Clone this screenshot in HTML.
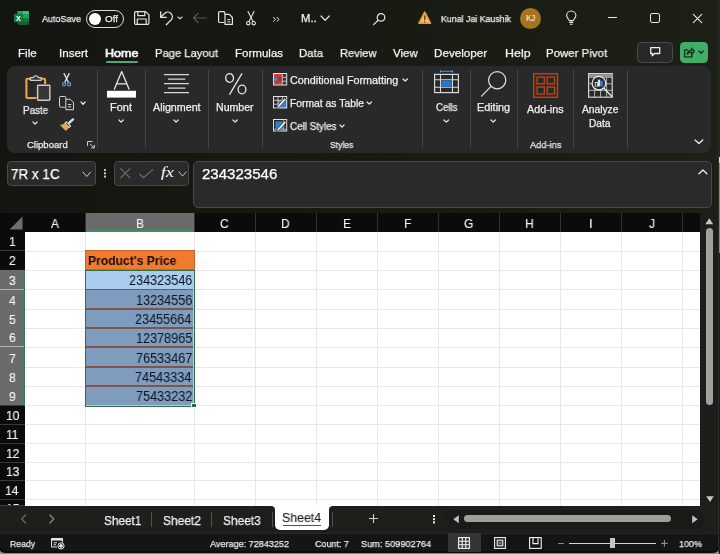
<!DOCTYPE html>
<html><head><meta charset="utf-8"><title>Excel</title>
<style>
*{box-sizing:border-box;margin:0;padding:0}
html,body{width:720px;height:554px;overflow:hidden;background:linear-gradient(90deg,#131510 0%,#171a12 45%,#1c2016 100%) #15180f;font-family:"Liberation Sans",sans-serif;color:#fff}
.a{position:absolute}
.t{position:absolute;white-space:nowrap;line-height:1;transform-origin:0 0;will-change:transform}
svg{position:absolute;overflow:visible}
</style></head><body>


<!-- title bar -->
<svg style="left:13.5px;top:11px" width="15" height="14" viewBox="0 0 15 14">
 <rect x="3.5" y="0" width="11.5" height="14" rx="1.2" fill="#185c37"/>
 <path d="M9 0h4.8a1.2 1.2 0 0 1 1.2 1.2v2.3h-6z" fill="#33c481"/>
 <rect x="9" y="3.5" width="6" height="3.5" fill="#21a366"/>
 <rect x="9" y="7" width="6" height="3.5" fill="#107c41"/>
 <rect x="3.5" y="0" width="5.5" height="3.5" fill="#21a366"/>
 <rect x="3.5" y="3.5" width="5.5" height="3.5" fill="#107c41"/>
 <rect x="0" y="2.8" width="8.5" height="8.5" rx="1" fill="#107c41"/>
 <text x="4.25" y="9.6" font-size="7" font-weight="bold" fill="#fff" text-anchor="middle" font-family="Liberation Sans, sans-serif">X</text>
</svg>
<div class="a" style="left:85.5px;top:9.5px;width:38.5px;height:18px;border:1.2px solid #d8d8d8;border-radius:9px"></div>
<div class="a" style="left:88.75px;top:12.5px;width:12px;height:12px;border-radius:6px;background:#fff"></div>

<div class="t" style="left:42px;top:13.96px;font-size:9.5px;color:#f0f0f0;transform:scaleX(0.944);-webkit-text-stroke:0.25px #f0f0f0;">AutoSave</div>
<div class="t" style="left:104.56px;top:13.96px;font-size:9.5px;color:#f0f0f0;transform:scaleX(1.032);-webkit-text-stroke:0.25px #f0f0f0;">Off</div>

<svg style="left:133.75px;top:11px" width="15.5" height="14" viewBox="0 0 15.5 14" fill="none" stroke="#e6e6e6" stroke-width="1.2" stroke-linejoin="round">
 <path d="M0.6 1.8a1.2 1.2 0 0 1 1.2-1.2h9.7l3.4 3v8.6a1.2 1.2 0 0 1-1.2 1.2h-11.9a1.2 1.2 0 0 1-1.2-1.2z"/>
 <path d="M3.8 0.6v4h7v-4M3.3 13.4v-5.4h8.9v5.4"/>
</svg>
<svg style="left:160px;top:10.5px" width="14" height="14" viewBox="0 0 14 14" fill="none" stroke="#e6e6e6" stroke-width="1.3" stroke-linecap="round" stroke-linejoin="round">
 <path d="M0.7 0.8v5.5h5.5"/><path d="M1 6l3.6-3.6a4.6 4.6 0 0 1 6.5 6.5l-4.8 4.8"/>
</svg>

<svg style="left:178.45px;top:17.27px" width="4.1" height="1.96" fill="none" stroke="#d8d8d8" stroke-width="1.1" stroke-linecap="round" stroke-linejoin="round"><path d="M0 0 L2.05 1.96 L4.1 0"/></svg>

<svg style="left:193.25px;top:13px" width="13" height="10" viewBox="0 0 13 10" fill="none" stroke="#555a50" stroke-width="1.1" stroke-linecap="round" stroke-linejoin="round"><path d="M5 0.5l-4.5 4.5l4.5 4.5M0.5 5h12.5"/></svg>
<svg style="left:217.5px;top:11px" width="15" height="14" viewBox="0 0 15 14" fill="none" stroke="#e6e6e6" stroke-width="1.2" stroke-linejoin="round">
 <path d="M6.3 11.5h-4.6a1.1 1.1 0 0 1-1.1-1.1v-8.7a1.1 1.1 0 0 1 1.1-1.1h4a1.1 1.1 0 0 1 1.1 1.1v1.5"/>
 <path d="M7 3.4h4.3l3.1 3.1v6.9h-7.4z"/><path d="M9.3 8.6h3M9.3 10.8h3" stroke-width="1"/>
</svg>
<svg style="left:245.5px;top:10.5px" width="10" height="14.5" viewBox="0 0 10 14.5" fill="none" stroke="#e6e6e6" stroke-width="1.1" stroke-linecap="round">
 <path d="M2 0.5l5 10M8 0.5l-5 10"/><circle cx="2.3" cy="12.2" r="1.7"/><circle cx="7.7" cy="12.2" r="1.7"/>
</svg>
<svg style="left:272.5px;top:16.5px" width="7" height="4.5" viewBox="0 0 7 4.5" fill="none" stroke="#e6e6e6" stroke-width="1" stroke-linecap="round" stroke-linejoin="round"><path d="M0.5 0.3l2 2l-2 2M4 0.3l2 2l-2 2"/></svg>

<div class="t" style="left:301.1px;top:13.54px;font-size:10px;color:#f0f0f0;transform:scaleX(1.127);-webkit-text-stroke:0.25px #f0f0f0;">M..</div>
<svg style="left:321.25px;top:16.3px" width="8.25" height="4.4" fill="none" stroke="#e6e6e6" stroke-width="1.2" stroke-linecap="round" stroke-linejoin="round"><path d="M0 0 L4.125 4.4 L8.25 0"/></svg>

<svg style="left:373.25px;top:12.5px" width="12.5" height="12" viewBox="0 0 12.5 12" fill="none" stroke="#e6e6e6" stroke-width="1.2" stroke-linecap="round">
 <circle cx="8" cy="4.4" r="3.8"/><path d="M5.2 7.2l-4.6 4.4"/>
</svg>
<svg style="left:418.25px;top:11.25px" width="13.5" height="13.25" viewBox="0 0 13.5 13.25">
 <path d="M6.75 1.2l5.7 11h-11.4z" fill="#f4bd78" stroke="#e8993c" stroke-width="1.7" stroke-linejoin="round"/>
 <path d="M6.75 4.5v4.8" stroke="#6a3c0c" stroke-width="1.4"/><circle cx="6.75" cy="11" r="0.8" fill="#6a3c0c"/>
</svg>

<div class="t" style="left:441.3px;top:13.96px;font-size:9.5px;color:#f0f0f0;transform:scaleX(0.926);-webkit-text-stroke:0.25px #f0f0f0;">Kunal Jai Kaushik</div>
<div class="a" style="left:520px;top:7.5px;width:21.25px;height:21.25px;border-radius:11px;background:#a67420"></div>
<div class="t" style="left:525.96px;top:14.15px;font-size:8.8px;color:#fff;transform:scaleX(0.911);">KJ</div>

<svg style="left:565.75px;top:11.25px" width="10.5" height="13.75" viewBox="0 0 10.5 13.75" fill="none" stroke="#e6e6e6" stroke-width="1.1" stroke-linejoin="round">
 <path d="M3.2 9.6c0-1.5-2.6-2.4-2.6-5a4.65 4.65 0 0 1 9.3 0c0 2.6-2.6 3.5-2.6 5z"/><path d="M3.3 11.4h3.9M3.9 13.2h2.7"/>
</svg>
<div class="a" style="left:608px;top:17px;width:9px;height:1.1px;background:#e6e6e6"></div>
<div class="a" style="left:650px;top:13px;width:10px;height:10px;border:1.2px solid #e6e6e6;border-radius:2px"></div>
<svg style="left:693px;top:13.5px" width="9" height="9" viewBox="0 0 9 9" stroke="#e6e6e6" stroke-width="1.1" stroke-linecap="round"><path d="M0.3 0.3l8.4 8.4M8.7 0.3l-8.4 8.4"/></svg>

<div class="t" style="left:18.32px;top:47.97px;font-size:11.5px;color:#f4f4f4;transform:scaleX(1.007);-webkit-text-stroke:0.25px #f4f4f4;">File</div>
<div class="t" style="left:58.95px;top:47.97px;font-size:11.5px;color:#f4f4f4;transform:scaleX(1.012);-webkit-text-stroke:0.25px #f4f4f4;">Insert</div>
<div class="t" style="left:104.99px;top:47.97px;font-size:11.5px;color:#f4f4f4;transform:scaleX(1.093);-webkit-text-stroke:0.7px #f4f4f4;">Home</div>
<div class="t" style="left:154.6px;top:47.97px;font-size:11.5px;color:#f4f4f4;transform:scaleX(0.975);-webkit-text-stroke:0.25px #f4f4f4;">Page Layout</div>
<div class="t" style="left:235.33px;top:47.97px;font-size:11.5px;color:#f4f4f4;transform:scaleX(1.003);-webkit-text-stroke:0.25px #f4f4f4;">Formulas</div>
<div class="t" style="left:299.09px;top:47.97px;font-size:11.5px;color:#f4f4f4;transform:scaleX(0.985);-webkit-text-stroke:0.25px #f4f4f4;">Data</div>
<div class="t" style="left:339.61px;top:47.97px;font-size:11.5px;color:#f4f4f4;transform:scaleX(0.965);-webkit-text-stroke:0.25px #f4f4f4;">Review</div>
<div class="t" style="left:392.94px;top:47.97px;font-size:11.5px;color:#f4f4f4;transform:scaleX(0.993);-webkit-text-stroke:0.25px #f4f4f4;">View</div>
<div class="t" style="left:434.07px;top:47.97px;font-size:11.5px;color:#f4f4f4;transform:scaleX(1.013);-webkit-text-stroke:0.25px #f4f4f4;">Developer</div>
<div class="t" style="left:504.5px;top:47.97px;font-size:11.5px;color:#f4f4f4;transform:scaleX(1.083);-webkit-text-stroke:0.25px #f4f4f4;">Help</div>
<div class="t" style="left:546.48px;top:47.97px;font-size:11.5px;color:#f4f4f4;transform:scaleX(0.995);-webkit-text-stroke:0.25px #f4f4f4;">Power Pivot</div>
<div class="a" style="left:106px;top:60.5px;width:32px;height:2px;background:#4fa873;border-radius:1px"></div>

<div class="a" style="left:636.9px;top:41.5px;width:35.9px;height:21.4px;background:#282828;border:1px solid #4b4b47;border-radius:4.5px"></div>
<svg style="left:649.7px;top:47px" width="10.4" height="9.8" viewBox="0 0 10.4 9.8" fill="none" stroke="#eeeeee" stroke-width="1.3" stroke-linejoin="round"><path d="M0.7 0.7h9v5.8h-5.2l-2.2 2.4v-2.4h-1.6z"/></svg>
<div class="a" style="left:680px;top:41.5px;width:28.1px;height:21.4px;background:#40ad68;border-radius:4.5px"></div>
<svg style="left:684px;top:46.8px" width="10.8" height="10.6" viewBox="0 0 11.5 11" fill="none" stroke="#12321d" stroke-width="1.35" stroke-linejoin="round" stroke-linecap="round"><path d="M4 2.8h-3.4v7.6h8v-2.6"/><path d="M3.3 7.6c0.3-2.6 2-4 4.7-4.1v-2.5l3 3.4l-3 3.4v-2.4c-2 0-3.5 0.6-4.7 2.2z"/></svg>

<svg style="left:699.4px;top:51.16px" width="4.2" height="2.18" fill="none" stroke="#12321d" stroke-width="1.4" stroke-linecap="round" stroke-linejoin="round"><path d="M0 0 L2.1 2.18 L4.2 0"/></svg>
<div class="a" style="left:7.3px;top:66px;width:704px;height:86.5px;background:#292929;border-radius:8px"></div>
<div class="a" style="left:96.7px;top:70px;width:1px;height:78px;background:#444"></div>
<div class="a" style="left:145.1px;top:70px;width:1px;height:78px;background:#444"></div>
<div class="a" style="left:207.9px;top:70px;width:1px;height:78px;background:#444"></div>
<div class="a" style="left:261.7px;top:70px;width:1px;height:78px;background:#444"></div>
<div class="a" style="left:421.6px;top:70px;width:1px;height:78px;background:#444"></div>
<div class="a" style="left:470.1px;top:70px;width:1px;height:78px;background:#444"></div>
<div class="a" style="left:517.2px;top:70px;width:1px;height:78px;background:#444"></div>
<div class="a" style="left:572.8px;top:70px;width:1px;height:78px;background:#444"></div>
<div class="a" style="left:626.6px;top:70px;width:1px;height:78px;background:#444"></div>

<!-- paste -->
<svg style="left:25px;top:72.5px" width="26" height="28" viewBox="0 0 26 28" fill="none">
 <path d="M6 5.8h-3.6a1 1 0 0 0-1 1v17.2a1 1 0 0 0 1 1h9" stroke="#e8a640" stroke-width="2.1"/>
 <path d="M15.5 5.8h3.6a1 1 0 0 1 1 1v4.2" stroke="#e8a640" stroke-width="2.1"/>
 <path d="M5.5 7.3v-2.6h2.8a2.6 2.6 0 0 1 5 0h2.8v2.6z" fill="#333" stroke="#cfcfcf" stroke-width="1.2" stroke-linejoin="round"/>
 <rect x="12.6" y="12.2" width="12.2" height="15" rx="0.6" fill="#363636" stroke="#c9c9c9" stroke-width="1.5"/>
</svg>
<div class="t" style="left:22.91px;top:105.73px;font-size:10px;color:#f0f0f0;transform:scaleX(0.982);-webkit-text-stroke:0.25px #f0f0f0;">Paste</div>
<svg style="left:33.225px;top:122.315px" width="4.15" height="2.07" fill="none" stroke="#e6e6e6" stroke-width="1.25" stroke-linecap="round" stroke-linejoin="round"><path d="M0 0 L2.075 2.07 L4.15 0"/></svg>

<svg style="left:61.8px;top:73.3px" width="9.2" height="13.7" viewBox="0 0 9.2 13.7" fill="none" stroke-linecap="round">
 <path d="M2.1 0.6l4.3 8.7M7.1 0.6l-4.3 8.7" stroke="#e4e4e4" stroke-width="1.3"/><circle cx="2.1" cy="11.3" r="1.6" stroke="#4f9be0" stroke-width="1.2"/><circle cx="7.1" cy="11.3" r="1.6" stroke="#4f9be0" stroke-width="1.2"/>
</svg>
<svg style="left:58.9px;top:95.5px" width="15" height="14.2" viewBox="0 0 15 14.2" fill="none" stroke="#d8d8d8" stroke-width="1" stroke-linejoin="round">
 <path d="M5.8 11.2h-4.3a1 1 0 0 1-1-1v-8.7a1 1 0 0 1 1-1h4.3a1 1 0 0 1 1 1v1.8"/>
 <path d="M6.8 3.3h4.5l3.2 3.2v7.2h-7.7z" fill="#292929"/><path d="M9 8.5h3.3M9 10.8h3.3"/>
</svg>
<svg style="left:80.525px;top:101.615px" width="4.15" height="2.27" fill="none" stroke="#e6e6e6" stroke-width="1.25" stroke-linecap="round" stroke-linejoin="round"><path d="M0 0 L2.075 2.27 L4.15 0"/></svg>

<svg style="left:59.5px;top:118.4px" width="14.5" height="13" viewBox="0 0 14.5 13" fill="none">
 <path d="M13 1.4l-3.6 3.3" stroke="#e0e0e0" stroke-width="2.4" stroke-linecap="round"/>
 <path d="M6.3 3.8l4.2 4.2l-1.5 1.5l-4.2-4.2z" fill="#292929" stroke="#e0e0e0" stroke-width="1.1" stroke-linejoin="round"/>
 <path d="M4.3 5.8l4.2 4.3l-2.8 2.4l-5.2-5.4c1.6 0.2 2.8-0.3 3.8-1.3z" fill="#e8a640" stroke="#e8c070" stroke-width="0.7" stroke-linejoin="round"/>
</svg>
<div class="t" style="left:26.73px;top:139.96px;font-size:9.5px;color:#ececec;transform:scaleX(0.997);-webkit-text-stroke:0.25px #ececec;">Clipboard</div>

<svg style="left:87.1px;top:141.2px" width="7.8" height="7.4" viewBox="0 0 7.8 7.4" fill="none" stroke="#d0d0d0" stroke-width="1"><path d="M0.5 5v-4.5h5"/><path d="M3 2.8l4 4M7.3 3.8v3.1h-3.1"/></svg>

<!-- font -->
<svg style="left:107px;top:71.4px" width="29" height="26.6" viewBox="0 0 29 26.6" fill="none">
 <path d="M7.2 18.6l7.5-18l7.5 18M9.6 12.8h10.2" stroke="#e6e6e6" stroke-width="1.3" stroke-linejoin="round"/>
 <rect x="0" y="19.8" width="29" height="6.8" fill="#fff"/>
</svg>
<div class="t" style="left:110.32px;top:102.94px;font-size:10px;color:#f0f0f0;transform:scaleX(1.097);-webkit-text-stroke:0.25px #f0f0f0;">Font</div>
<svg style="left:119.125px;top:119.515px" width="4.25" height="2.17" fill="none" stroke="#e6e6e6" stroke-width="1.25" stroke-linecap="round" stroke-linejoin="round"><path d="M0 0 L2.125 2.17 L4.25 0"/></svg>

<!-- alignment -->
<svg style="left:164px;top:73.5px" width="25" height="19.5" viewBox="0 0 25 19.5" stroke="#d8d8d8" stroke-width="1.2">
 <path d="M0 0.6h25M3.9 5.1h17.5M0 9.6h25M3.9 14.1h17.5M0 18.7h25"/>
</svg>
<div class="t" style="left:152.9px;top:102.94px;font-size:10px;color:#f0f0f0;transform:scaleX(1.07);-webkit-text-stroke:0.25px #f0f0f0;">Alignment</div>
<svg style="left:174.275px;top:119.515px" width="4.2" height="2.17" fill="none" stroke="#e6e6e6" stroke-width="1.25" stroke-linecap="round" stroke-linejoin="round"><path d="M0 0 L2.1 2.17 L4.2 0"/></svg>

<!-- number -->
<svg style="left:224.7px;top:72.75px" width="21.6" height="22" viewBox="0 0 21.6 22" fill="none" stroke="#e6e6e6" stroke-width="1.3">
 <ellipse cx="4.6" cy="5" rx="3.9" ry="4.3"/><ellipse cx="17" cy="16.5" rx="3.9" ry="4.3"/><path d="M17 0.3l-12.5 21.4"/>
</svg>
<div class="t" style="left:216.05px;top:102.94px;font-size:10px;color:#f0f0f0;transform:scaleX(1.056);-webkit-text-stroke:0.25px #f0f0f0;">Number</div>
<svg style="left:232.525px;top:119.515px" width="4.25" height="2.17" fill="none" stroke="#e6e6e6" stroke-width="1.25" stroke-linecap="round" stroke-linejoin="round"><path d="M0 0 L2.125 2.17 L4.25 0"/></svg>

<!-- styles -->
<svg style="left:272.7px;top:73.3px" width="14.2" height="12.5" viewBox="0 0 14.2 12.5" fill="none">
 <rect x="0.5" y="0.5" width="13.2" height="11.5" fill="#3a3a3a"/>
 <rect x="1" y="1" width="8" height="3.2" fill="#e23b30"/><rect x="5" y="4.2" width="4.2" height="4" fill="#b03028"/>
 <rect x="1" y="4.2" width="4" height="4" fill="#3f83d8"/><rect x="1" y="8.2" width="8" height="3.3" fill="#e23b30"/>
 <path d="M5 0.5v11.5M9.3 0.5v11.5M0.5 4.3h13.2M0.5 8.2h13.2" stroke="#7a4a48" stroke-width="0.6"/>
 <rect x="0.5" y="0.5" width="13.2" height="11.5" stroke="#e2e2e2" stroke-width="1"/>
 <path d="M9.3 0.5v11.5M9.3 4.3h4.4M9.3 8.2h4.4" stroke="#cfcfcf" stroke-width="0.8"/>
</svg>
<div class="t" style="left:289.86px;top:76.03px;font-size:10px;color:#f0f0f0;transform:scaleX(1.077);-webkit-text-stroke:0.25px #f0f0f0;">Conditional Formatting</div>
<svg style="left:402.525px;top:78.715px" width="4.45" height="2.07" fill="none" stroke="#e6e6e6" stroke-width="1.25" stroke-linecap="round" stroke-linejoin="round"><path d="M0 0 L2.225 2.07 L4.45 0"/></svg>

<svg style="left:272.7px;top:96.2px" width="14.2" height="13.3" viewBox="0 0 14.2 13.3" fill="none">
 <rect x="5" y="4.3" width="8.7" height="7.7" fill="#2f7fd6"/>
 <rect x="0.5" y="0.5" width="13.2" height="11.5" stroke="#e2e2e2" stroke-width="1"/>
 <path d="M5 0.5v11.5M9.3 0.5v4M0.5 4.3h13.2M0.5 8.2h5" stroke="#d6d6d6" stroke-width="0.9"/>
 <path d="M13.3 3.6l-6.2 6.8c-1 1.1-2.2 1.7-3.6 2.4c0.3-1.5 0.8-2.8 1.8-3.9l6.2-6.8z" fill="#f0f0f0" stroke="#2a2a2a" stroke-width="0.7"/>
</svg>
<div class="t" style="left:289.57px;top:99.03px;font-size:10px;color:#f0f0f0;transform:scaleX(1.034);-webkit-text-stroke:0.25px #f0f0f0;">Format as Table</div>
<svg style="left:366.92499999999995px;top:101.715px" width="4.55" height="2.07" fill="none" stroke="#e6e6e6" stroke-width="1.25" stroke-linecap="round" stroke-linejoin="round"><path d="M0 0 L2.275 2.07 L4.55 0"/></svg>

<svg style="left:272.7px;top:119.1px" width="14.2" height="13.3" viewBox="0 0 14.2 13.3" fill="none">
 <rect x="0.5" y="0.5" width="13.2" height="11.5" stroke="#e2e2e2" stroke-width="1"/>
 <rect x="2.4" y="2.4" width="8" height="7.7" fill="#2f7fd6"/>
 <path d="M10.7 0.5v11.5M0.5 10.2h13.2" stroke="#cfcfcf" stroke-width="0.7"/>
 <path d="M13.3 3.6l-6.2 6.8c-1 1.1-2.2 1.7-3.6 2.4c0.3-1.5 0.8-2.8 1.8-3.9l6.2-6.8z" fill="#f0f0f0" stroke="#2a2a2a" stroke-width="0.7"/>
</svg>
<div class="t" style="left:289.91px;top:121.84px;font-size:10px;color:#f0f0f0;transform:scaleX(0.983);-webkit-text-stroke:0.25px #f0f0f0;">Cell Styles</div>
<svg style="left:340.325px;top:124.515px" width="4.05" height="2.07" fill="none" stroke="#e6e6e6" stroke-width="1.25" stroke-linecap="round" stroke-linejoin="round"><path d="M0 0 L2.025 2.07 L4.05 0"/></svg>
<div class="t" style="left:330.01px;top:140.16px;font-size:9.5px;color:#ececec;transform:scaleX(0.903);-webkit-text-stroke:0.25px #ececec;">Styles</div>

<!-- cells -->
<svg style="left:433.9px;top:70.2px" width="25" height="23.2" viewBox="0 0 25 23.2" fill="none">
 <path d="M6.5 1.3h12M6.5 0v2.6M18.5 0v2.6" stroke="#4b97e4" stroke-width="1"/>
 <rect x="0.6" y="4.4" width="23.8" height="18.2" stroke="#d8d8d8" stroke-width="1.2"/>
 <path d="M6.5 4.4v18.2M18.5 4.4v18.2M0.6 9.8h23.8M0.6 17.2h23.8" stroke="#d8d8d8" stroke-width="1.1"/>
 <rect x="7.3" y="10.7" width="10.4" height="5.8" fill="#1f78dc"/>
</svg>
<div class="t" style="left:435.62px;top:102.94px;font-size:10px;color:#f0f0f0;transform:scaleX(0.967);-webkit-text-stroke:0.25px #f0f0f0;">Cells</div>
<svg style="left:443.92499999999995px;top:119.515px" width="4.55" height="2.17" fill="none" stroke="#e6e6e6" stroke-width="1.25" stroke-linecap="round" stroke-linejoin="round"><path d="M0 0 L2.275 2.17 L4.55 0"/></svg>

<!-- editing -->
<svg style="left:481.2px;top:71.1px" width="25.4" height="25.8" viewBox="0 0 25.4 25.8" fill="none" stroke="#e0e0e0" stroke-width="1.2" stroke-linecap="round">
 <circle cx="16.2" cy="9.2" r="8.6"/><path d="M10 15.4l-9.4 9.8"/>
</svg>
<div class="t" style="left:477.04px;top:102.94px;font-size:10px;color:#f0f0f0;transform:scaleX(1.081);-webkit-text-stroke:0.25px #f0f0f0;">Editing</div>
<svg style="left:491.125px;top:119.515px" width="4.35" height="2.17" fill="none" stroke="#e6e6e6" stroke-width="1.25" stroke-linecap="round" stroke-linejoin="round"><path d="M0 0 L2.175 2.17 L4.35 0"/></svg>

<!-- add-ins -->
<svg style="left:532.8px;top:72.9px" width="25.2" height="25" viewBox="0 0 25.2 25" fill="none" stroke="#b44a22" stroke-width="1.3">
 <rect x="0.7" y="0.7" width="23.8" height="23.6" fill="#4b2317"/>
 <rect x="4" y="4.1" width="7.3" height="6.7" fill="#2a2928"/><rect x="14.2" y="4.1" width="7.3" height="6.7" fill="#2a2928"/><rect x="4" y="14.1" width="7.3" height="6.9" fill="#2a2928"/><rect x="14.2" y="14.1" width="7.3" height="6.9" fill="#2a2928"/>
</svg>
<div class="t" style="left:527.2px;top:104.53px;font-size:10px;color:#f0f0f0;transform:scaleX(1.079);-webkit-text-stroke:0.25px #f0f0f0;">Add-ins</div>
<div class="t" style="left:529.9px;top:140.16px;font-size:9.5px;color:#ececec;transform:scaleX(0.976);-webkit-text-stroke:0.25px #ececec;">Add-ins</div>

<!-- analyze -->
<svg style="left:587.8px;top:72.9px" width="25.5" height="25.5" viewBox="0 0 25.5 25.5" fill="none">
 <rect x="0.6" y="0.6" width="23.6" height="23.6" stroke="#d4d4d4" stroke-width="1.2"/>
 <rect x="1.2" y="1.2" width="22.4" height="2.6" fill="#9a9a9a"/>
 <path d="M0.6 4.3h23.6M0.6 10.8h23.6M0.6 17.3h23.6M6.6 4.3v19.9M12.6 17.3v6.9M18.6 4.3v19.9" stroke="#bdbdbd" stroke-width="0.9"/>
 <circle cx="10.9" cy="10.2" r="6.8" fill="#2b2b2b" stroke="#e6e6e6" stroke-width="1.3"/>
 <rect x="7.2" y="9.4" width="2.3" height="3.8" fill="none" stroke="#e6e6e6" stroke-width="0.8"/><rect x="9.9" y="6.6" width="2.3" height="6.8" fill="#d8e6f4"/><rect x="12.4" y="7.8" width="2.4" height="5.6" fill="#2b86e6"/>
 <path d="M15.9 15.3l8.4 8.7" stroke="#e6e6e6" stroke-width="1.5"/>
</svg>
<div class="t" style="left:582.2px;top:104.73px;font-size:10px;color:#f0f0f0;transform:scaleX(1.024);-webkit-text-stroke:0.25px #f0f0f0;">Analyze</div>
<div class="t" style="left:589.18px;top:118.73px;font-size:10px;color:#f0f0f0;transform:scaleX(1.02);-webkit-text-stroke:0.25px #f0f0f0;">Data</div>
<svg style="left:694.55px;top:140.13000000000002px" width="7.8" height="3.54" fill="none" stroke="#ececec" stroke-width="1.3" stroke-linecap="round" stroke-linejoin="round"><path d="M0 0 L3.9 3.54 L7.8 0"/></svg>

<div class="a" style="left:6.9px;top:160.5px;width:89px;height:25px;background:#2a2a2a;border:1px solid #484a44;border-radius:4px"></div>
<div class="t" style="left:11.03px;top:166.73px;font-size:14.5px;color:#fff;transform:scaleX(0.929);-webkit-text-stroke:0.25px #fff;">7R x 1C</div>
<svg style="left:82.7px;top:171.54000000000002px" width="7.6" height="4.52" fill="none" stroke="#d0d0d0" stroke-width="1" stroke-linecap="round" stroke-linejoin="round"><path d="M0 0 L3.8 4.52 L7.6 0"/></svg>

<div class="a" style="left:104px;top:169.3px;width:1.6px;height:1.6px;background:#c8c8c8;box-shadow:0 3.3px 0 #c8c8c8,0 6.6px 0 #c8c8c8"></div>
<div class="a" style="left:113.9px;top:160.5px;width:75px;height:25px;background:#2a2a2a;border:1px solid #484a44;border-radius:4px"></div>
<svg style="left:120px;top:168.4px" width="10.6" height="10.6" viewBox="0 0 10.6 10.6" stroke="#707070" stroke-width="1.1"><path d="M0.4 0.4l9.8 9.8M10.2 0.4l-9.8 9.8"/></svg>
<svg style="left:138.9px;top:169.3px" width="14.4" height="9.1" viewBox="0 0 14.4 9.1" fill="none" stroke="#707070" stroke-width="1.1"><path d="M0.4 5l4 3.7l9.6-8.3"/></svg>
<div class="t" style="left:160.6px;top:165.3px;font-size:14.5px;color:#ececec;font-family:'Liberation Serif',serif;font-style:italic;-webkit-text-stroke:0.15px #ececec;transform:scaleX(1.22)">fx</div>

<svg style="left:179.20000000000002px;top:171.54000000000002px" width="7.1" height="4.12" fill="none" stroke="#c4c4c4" stroke-width="1" stroke-linecap="round" stroke-linejoin="round"><path d="M0 0 L3.55 4.12 L7.1 0"/></svg>

<div class="a" style="left:192.5px;top:160.5px;width:519.5px;height:47px;background:#2a2a2a;border:1px solid #484a44;border-radius:5px"></div>
<div class="t" style="left:201.75px;top:166.73px;font-size:14.5px;color:#fff;transform:scaleX(1.038);-webkit-text-stroke:0.25px #fff;">234323546</div>
<svg style="left:698.55px;top:170.33px" width="7.9" height="3.84" fill="none" stroke="#ececec" stroke-width="1.3" stroke-linecap="round" stroke-linejoin="round"><path d="M0 3.84 L3.95 0 L7.9 3.84"/></svg>
<div class="a" style="left:0;top:213px;width:700px;height:292.5px;background:#0b0b0b"></div>
<div class="a" style="left:25px;top:231.5px;width:675px;height:274px;background:#fff"></div>
<svg style="left:0;top:213px" width="25" height="19" viewBox="0 0 25 19"><path d="M22.5 3.5v13h-13z" fill="#6e6e6e"/></svg>
<div class="t" style="left:51.27px;top:216.8px;font-size:13px;color:#f2f2f2;transform:scaleX(0.92);-webkit-text-stroke:0.15px #f2f2f2;">A</div>
<div class="a" style="left:85.5px;top:213px;width:108.75px;height:18px;background:#6b6b6b"></div>
<div class="a" style="left:85.5px;top:230.3px;width:108.75px;height:1.5px;background:#3f8f60"></div>
<div class="t" style="left:135.72px;top:216.8px;font-size:13px;color:#f2f2f2;transform:scaleX(0.92);-webkit-text-stroke:0.15px #f2f2f2;">B</div>
<div class="t" style="left:220.35px;top:216.8px;font-size:13px;color:#f2f2f2;transform:scaleX(0.92);-webkit-text-stroke:0.15px #f2f2f2;">C</div>
<div class="t" style="left:281.24px;top:216.8px;font-size:13px;color:#f2f2f2;transform:scaleX(0.92);-webkit-text-stroke:0.15px #f2f2f2;">D</div>
<div class="t" style="left:342.53px;top:216.8px;font-size:13px;color:#f2f2f2;transform:scaleX(0.92);-webkit-text-stroke:0.15px #f2f2f2;">E</div>
<div class="t" style="left:403.86px;top:216.8px;font-size:13px;color:#f2f2f2;transform:scaleX(0.92);-webkit-text-stroke:0.15px #f2f2f2;">F</div>
<div class="t" style="left:464.24px;top:216.8px;font-size:13px;color:#f2f2f2;transform:scaleX(0.92);-webkit-text-stroke:0.15px #f2f2f2;">G</div>
<div class="t" style="left:525.44px;top:216.8px;font-size:13px;color:#f2f2f2;transform:scaleX(0.92);-webkit-text-stroke:0.15px #f2f2f2;">H</div>
<div class="t" style="left:589.11px;top:216.8px;font-size:13px;color:#f2f2f2;transform:scaleX(0.92);-webkit-text-stroke:0.15px #f2f2f2;">I</div>
<div class="t" style="left:649.12px;top:216.8px;font-size:13px;color:#f2f2f2;transform:scaleX(0.92);-webkit-text-stroke:0.15px #f2f2f2;">J</div>
<div class="a" style="left:85px;top:213px;width:1px;height:18.5px;background:#333"></div>
<div class="a" style="left:193.75px;top:213px;width:1px;height:18.5px;background:#333"></div>
<div class="a" style="left:254.75px;top:213px;width:1px;height:18.5px;background:#333"></div>
<div class="a" style="left:315.75px;top:213px;width:1px;height:18.5px;background:#333"></div>
<div class="a" style="left:376.75px;top:213px;width:1px;height:18.5px;background:#333"></div>
<div class="a" style="left:437.75px;top:213px;width:1px;height:18.5px;background:#333"></div>
<div class="a" style="left:498.75px;top:213px;width:1px;height:18.5px;background:#333"></div>
<div class="a" style="left:559.75px;top:213px;width:1px;height:18.5px;background:#333"></div>
<div class="a" style="left:620.75px;top:213px;width:1px;height:18.5px;background:#333"></div>
<div class="a" style="left:681.75px;top:213px;width:1px;height:18.5px;background:#333"></div>
<div class="a" style="left:699.5px;top:213px;width:1px;height:18.5px;background:#333"></div>
<div class="t" style="left:8.95px;top:235.23px;font-size:13.2px;color:#f5f5f5;transform:scaleX(0.92);-webkit-text-stroke:0.15px #f5f5f5;">1</div>
<div class="a" style="left:0;top:250px;width:24.5px;height:1px;background:#3a3a3a"></div>
<div class="t" style="left:9.13px;top:254.23px;font-size:13.2px;color:#f5f5f5;transform:scaleX(0.92);-webkit-text-stroke:0.15px #f5f5f5;">2</div>
<div class="a" style="left:0;top:270px;width:24.5px;height:1px;background:#3a3a3a"></div>
<div class="a" style="left:0;top:270px;width:24.5px;height:19.5px;background:#6b6b6b"></div>
<div class="t" style="left:9.13px;top:273.73px;font-size:13.2px;color:#f5f5f5;transform:scaleX(0.92);-webkit-text-stroke:0.15px #f5f5f5;">3</div>
<div class="a" style="left:0;top:289px;width:24.5px;height:1px;background:#b0b0b0"></div>
<div class="a" style="left:0;top:289.5px;width:24.5px;height:19.899999999999977px;background:#6b6b6b"></div>
<div class="t" style="left:9.16px;top:293.63px;font-size:13.2px;color:#f5f5f5;transform:scaleX(0.92);-webkit-text-stroke:0.15px #f5f5f5;">4</div>
<div class="a" style="left:0;top:309px;width:24.5px;height:1px;background:#b0b0b0"></div>
<div class="a" style="left:0;top:309.4px;width:24.5px;height:19px;background:#6b6b6b"></div>
<div class="t" style="left:9.13px;top:312.63px;font-size:13.2px;color:#f5f5f5;transform:scaleX(0.92);-webkit-text-stroke:0.15px #f5f5f5;">5</div>
<div class="a" style="left:0;top:328px;width:24.5px;height:1px;background:#b0b0b0"></div>
<div class="a" style="left:0;top:328.4px;width:24.5px;height:18.600000000000023px;background:#6b6b6b"></div>
<div class="t" style="left:9.07px;top:331.23px;font-size:13.2px;color:#f5f5f5;transform:scaleX(0.92);-webkit-text-stroke:0.15px #f5f5f5;">6</div>
<div class="a" style="left:0;top:346px;width:24.5px;height:1px;background:#b0b0b0"></div>
<div class="a" style="left:0;top:347px;width:24.5px;height:20.30000000000001px;background:#6b6b6b"></div>
<div class="t" style="left:9.13px;top:351.53px;font-size:13.2px;color:#f5f5f5;transform:scaleX(0.92);-webkit-text-stroke:0.15px #f5f5f5;">7</div>
<div class="a" style="left:0;top:367px;width:24.5px;height:1px;background:#b0b0b0"></div>
<div class="a" style="left:0;top:367.3px;width:24.5px;height:19.099999999999966px;background:#6b6b6b"></div>
<div class="t" style="left:9.13px;top:370.63px;font-size:13.2px;color:#f5f5f5;transform:scaleX(0.92);-webkit-text-stroke:0.15px #f5f5f5;">8</div>
<div class="a" style="left:0;top:386px;width:24.5px;height:1px;background:#b0b0b0"></div>
<div class="a" style="left:0;top:386.4px;width:24.5px;height:19.100000000000023px;background:#6b6b6b"></div>
<div class="t" style="left:9.13px;top:389.73px;font-size:13.2px;color:#f5f5f5;transform:scaleX(0.92);-webkit-text-stroke:0.15px #f5f5f5;">9</div>
<div class="a" style="left:0;top:405px;width:24.5px;height:1px;background:#3a3a3a"></div>
<div class="t" style="left:5.52px;top:408.63px;font-size:13.2px;color:#f5f5f5;transform:scaleX(0.92);-webkit-text-stroke:0.15px #f5f5f5;">10</div>
<div class="a" style="left:0;top:424px;width:24.5px;height:1px;background:#3a3a3a"></div>
<div class="t" style="left:6.03px;top:427.53px;font-size:13.2px;color:#f5f5f5;transform:scaleX(0.92);-webkit-text-stroke:0.15px #f5f5f5;">11</div>
<div class="a" style="left:0;top:443px;width:24.5px;height:1px;background:#3a3a3a"></div>
<div class="t" style="left:5.61px;top:446.63px;font-size:13.2px;color:#f5f5f5;transform:scaleX(0.92);-webkit-text-stroke:0.15px #f5f5f5;">12</div>
<div class="a" style="left:0;top:462px;width:24.5px;height:1px;background:#3a3a3a"></div>
<div class="t" style="left:5.55px;top:465.13px;font-size:13.2px;color:#f5f5f5;transform:scaleX(0.92);-webkit-text-stroke:0.15px #f5f5f5;">13</div>
<div class="a" style="left:0;top:480px;width:24.5px;height:1px;background:#3a3a3a"></div>
<div class="t" style="left:5.46px;top:484.03px;font-size:13.2px;color:#f5f5f5;transform:scaleX(0.92);-webkit-text-stroke:0.15px #f5f5f5;">14</div>
<div class="a" style="left:0;top:499px;width:24.5px;height:1px;background:#3a3a3a"></div>
<div class="a" style="left:0;top:500.8px;width:25px;height:4.699999999999989px;overflow:hidden"><div class="t" style="left:5.55px;top:1.23px;font-size:13.2px;color:#f5f5f5;transform:scaleX(0.92);-webkit-text-stroke:0.15px #f5f5f5;">15</div></div>
<div class="a" style="left:0;top:505px;width:24.5px;height:1px;background:#3a3a3a"></div>
<div class="a" style="left:24.2px;top:270px;width:1.2px;height:135.5px;background:#357a52"></div>
<div class="a" style="left:25px;top:250.5px;width:675px;height:1px;background:#e8e8e8"></div>
<div class="a" style="left:25px;top:269.5px;width:675px;height:1px;background:#e8e8e8"></div>
<div class="a" style="left:25px;top:289px;width:675px;height:1px;background:#e8e8e8"></div>
<div class="a" style="left:25px;top:308.9px;width:675px;height:1px;background:#e8e8e8"></div>
<div class="a" style="left:25px;top:327.9px;width:675px;height:1px;background:#e8e8e8"></div>
<div class="a" style="left:25px;top:346.5px;width:675px;height:1px;background:#e8e8e8"></div>
<div class="a" style="left:25px;top:366.8px;width:675px;height:1px;background:#e8e8e8"></div>
<div class="a" style="left:25px;top:385.9px;width:675px;height:1px;background:#e8e8e8"></div>
<div class="a" style="left:25px;top:405px;width:675px;height:1px;background:#e8e8e8"></div>
<div class="a" style="left:25px;top:423.9px;width:675px;height:1px;background:#e8e8e8"></div>
<div class="a" style="left:25px;top:442.8px;width:675px;height:1px;background:#e8e8e8"></div>
<div class="a" style="left:25px;top:461.9px;width:675px;height:1px;background:#e8e8e8"></div>
<div class="a" style="left:25px;top:480.4px;width:675px;height:1px;background:#e8e8e8"></div>
<div class="a" style="left:25px;top:499.3px;width:675px;height:1px;background:#e8e8e8"></div>
<div class="a" style="left:85px;top:231.5px;width:1px;height:274px;background:#e8e8e8"></div>
<div class="a" style="left:193.75px;top:231.5px;width:1px;height:274px;background:#e8e8e8"></div>
<div class="a" style="left:254.75px;top:231.5px;width:1px;height:274px;background:#e8e8e8"></div>
<div class="a" style="left:315.75px;top:231.5px;width:1px;height:274px;background:#e8e8e8"></div>
<div class="a" style="left:376.75px;top:231.5px;width:1px;height:274px;background:#e8e8e8"></div>
<div class="a" style="left:437.75px;top:231.5px;width:1px;height:274px;background:#e8e8e8"></div>
<div class="a" style="left:498.75px;top:231.5px;width:1px;height:274px;background:#e8e8e8"></div>
<div class="a" style="left:559.75px;top:231.5px;width:1px;height:274px;background:#e8e8e8"></div>
<div class="a" style="left:620.75px;top:231.5px;width:1px;height:274px;background:#e8e8e8"></div>
<div class="a" style="left:681.75px;top:231.5px;width:1px;height:274px;background:#e8e8e8"></div>
<div class="a" style="left:85.2px;top:250.3px;width:109.5px;height:20px;background:#ee7b30;border:1px solid #c9632a"></div>
<div class="t" style="left:87.61px;top:254.2px;font-size:13px;color:#1a0d06;font-weight:bold;transform:scaleX(0.932);">Product's Price</div>
<div class="a" style="left:85.5px;top:270px;width:109px;height:136px;background:#b9c9dc"></div>
<div class="a" style="left:86.3px;top:270.8px;width:106.9px;height:134.4px;background:#7f9cbe"></div>
<div class="a" style="left:86.3px;top:270.8px;width:106.9px;height:18.2px;background:#a9cbee"></div>
<div class="t" style="left:128.64px;top:273.2px;font-size:14.3px;color:#0d1420;transform:scaleX(0.884);">234323546</div>
<div class="a" style="left:86.3px;top:288.5px;width:106.9px;height:1.9px;background:#7e5546"></div>
<div class="t" style="left:135.65px;top:293.1px;font-size:14.3px;color:#0d1420;transform:scaleX(0.884);">13234556</div>
<div class="a" style="left:86.3px;top:308.4px;width:106.9px;height:1.9px;background:#7e5546"></div>
<div class="t" style="left:135.46px;top:312.1px;font-size:14.3px;color:#0d1420;transform:scaleX(0.884);">23455664</div>
<div class="a" style="left:86.3px;top:327.4px;width:106.9px;height:1.9px;background:#7e5546"></div>
<div class="t" style="left:135.65px;top:330.7px;font-size:14.3px;color:#0d1420;transform:scaleX(0.884);">12378965</div>
<div class="a" style="left:86.3px;top:346px;width:106.9px;height:1.9px;background:#7e5546"></div>
<div class="t" style="left:135.78px;top:351px;font-size:14.3px;color:#0d1420;transform:scaleX(0.884);">76533467</div>
<div class="a" style="left:86.3px;top:366.3px;width:106.9px;height:1.9px;background:#7e5546"></div>
<div class="t" style="left:135.46px;top:370.1px;font-size:14.3px;color:#0d1420;transform:scaleX(0.884);">74543334</div>
<div class="a" style="left:86.3px;top:385.4px;width:106.9px;height:1.9px;background:#7e5546"></div>
<div class="t" style="left:135.78px;top:389.2px;font-size:14.3px;color:#0d1420;transform:scaleX(0.884);">75433232</div>
<div class="a" style="left:85px;top:269.5px;width:110px;height:137px;border:1.1px solid #2f7049"></div>
<div class="a" style="left:191.3px;top:403.1px;width:5.3px;height:5.1px;background:#25693f;border:0.8px solid #fff"></div>

<div class="a" style="left:700px;top:213px;width:18px;height:293px;background:#1d1d19"></div>
<svg style="left:705px;top:217.5px" width="8.5" height="6.5" viewBox="0 0 8.5 6.5"><path d="M4.25 0.3l4 6h-8z" fill="#c4c4c4"/></svg>
<div class="a" style="left:705.5px;top:228px;width:7.5px;height:176.5px;background:#a0a0a0;border-radius:3.75px"></div>
<svg style="left:705.5px;top:496.3px" width="8" height="6.2" viewBox="0 0 8 6.2"><path d="M4 6l3.8-5.8h-7.6z" fill="#c4c4c4"/></svg>


<div class="a" style="left:0;top:505.5px;width:718px;height:27.5px;background:#1e1e1a"></div>
<svg style="left:20.5px;top:514px" width="5.5" height="10" viewBox="0 0 5.5 10" fill="none" stroke="#707070" stroke-width="1.1"><path d="M5 0.5l-4.3 4.5l4.3 4.5"/></svg>
<svg style="left:49px;top:514px" width="5.5" height="10" viewBox="0 0 5.5 10" fill="none" stroke="#909090" stroke-width="1.1"><path d="M0.5 0.5l4.3 4.5l-4.3 4.5"/></svg>

<div class="t" style="left:103.97px;top:514px;font-size:13px;color:#f2f2f2;transform:scaleX(0.905);-webkit-text-stroke:0.25px #f2f2f2;">Sheet1</div>
<div class="t" style="left:162.71px;top:514px;font-size:13px;color:#f2f2f2;transform:scaleX(0.919);-webkit-text-stroke:0.25px #f2f2f2;">Sheet2</div>
<div class="t" style="left:222.71px;top:514px;font-size:13px;color:#f2f2f2;transform:scaleX(0.916);-webkit-text-stroke:0.25px #f2f2f2;">Sheet3</div>
<div class="a" style="left:150.75px;top:511.5px;width:1px;height:15.5px;background:#505050"></div>
<div class="a" style="left:211.25px;top:511.5px;width:1px;height:15.5px;background:#505050"></div>
<div class="a" style="left:271.5px;top:511.5px;width:1px;height:15.5px;background:#505050"></div>
<div class="a" style="left:332px;top:511.5px;width:1px;height:15.5px;background:#505050"></div>

<div class="a" style="left:275px;top:505px;width:53.75px;height:24.5px;background:#fff;border-radius:0 0 5px 5px"></div>
<svg style="left:271px;top:505.5px" width="4" height="4" viewBox="0 0 4 4"><path d="M0 0h4v4a4 4 0 0 0-4-4z" fill="#fff"/></svg>
<svg style="left:328.75px;top:505.5px" width="4" height="4" viewBox="0 0 4 4"><path d="M4 0h-4v4a4 4 0 0 1 4-4z" fill="#fff"/></svg>
<div class="t" style="left:281.94px;top:511px;font-size:13px;color:#1a1a1a;transform:scaleX(0.949);-webkit-text-stroke:0.1px #1a1a1a;">Sheet4</div>

<div class="a" style="left:282.5px;top:524.5px;width:38.25px;height:1.8px;background:#1e7145"></div>
<svg style="left:369.25px;top:514.25px" width="9" height="9" viewBox="0 0 9 9" stroke="#d0d0d0" stroke-width="1.1"><path d="M4.5 0v9M0 4.5h9"/></svg>
<div class="a" style="left:433.2px;top:515.3px;width:2.2px;height:2.2px;background:#ececec;box-shadow:0 3.2px 0 #ececec,0 6.4px 0 #ececec"></div>
<div class="a" style="left:446px;top:509.5px;width:258px;height:19px;background:#1a1a16;border-radius:9px"></div>
<svg style="left:453px;top:514.7px" width="6" height="8.3" viewBox="0 0 6 8.3"><path d="M0.3 4.15l5.5-4v8z" fill="#c0c0c0"/></svg>
<div class="a" style="left:464.2px;top:515.2px;width:207.3px;height:7.2px;background:#9e9e9e;border-radius:3.6px"></div>
<svg style="left:691.5px;top:514.7px" width="6" height="8.3" viewBox="0 0 6 8.3"><path d="M5.7 4.15l-5.5-4v8z" fill="#c0c0c0"/></svg>


<div class="a" style="left:0;top:550px;width:720px;height:4px;background:#8a8a8a"></div>
<div class="a" style="left:-1px;top:533px;width:719.5px;height:20px;background:#0a0a0a;border-radius:0 0 6px 6px"></div>
<div class="a" style="left:0;top:533px;width:718px;height:18px;background:#151515;border-top:1px solid #262623;border-radius:0 0 5px 5px"></div>

<div class="t" style="left:9.71px;top:538.79px;font-size:9.7px;color:#ececec;transform:scaleX(0.895);-webkit-text-stroke:0.25px #ececec;">Ready</div>

<svg style="left:50.8px;top:537.8px" width="14" height="11.6" viewBox="0 0 14 11.6" fill="none" stroke="#e6e6e6" stroke-width="1"><path d="M6 9h-5.5v-8.5h11v4"/><path d="M0.5 1.5h11" stroke-width="2.2"/><path d="M2.5 4.8h3.5M2.5 6.8h2.5"/><circle cx="10" cy="7.9" r="3.1"/><circle cx="10" cy="7.9" r="1.4" fill="#e6e6e6"/></svg>

<div class="t" style="left:210px;top:539.09px;font-size:9.7px;color:#ececec;transform:scaleX(0.937);-webkit-text-stroke:0.25px #ececec;">Average: 72843252</div>
<div class="t" style="left:314.55px;top:539.09px;font-size:9.7px;color:#ececec;transform:scaleX(0.924);-webkit-text-stroke:0.25px #ececec;">Count: 7</div>
<div class="t" style="left:361.34px;top:539.09px;font-size:9.7px;color:#ececec;transform:scaleX(0.95);-webkit-text-stroke:0.25px #ececec;">Sum: 509902764</div>

<div class="a" style="left:448px;top:533px;width:33px;height:19px;background:#353535"></div>
<svg style="left:458.2px;top:537px" width="12" height="12" viewBox="0 0 12 12" fill="none" stroke="#f4f4f4" stroke-width="1.1"><rect x="0.6" y="0.6" width="10.8" height="10.8"/><path d="M4.2 0.6v10.8M7.8 0.6v10.8M0.6 4.2h10.8M0.6 7.8h10.8"/></svg>
<svg style="left:494.4px;top:537px" width="12" height="12" viewBox="0 0 12 12" fill="none" stroke="#f4f4f4" stroke-width="1.1"><rect x="0.6" y="0.6" width="10.8" height="10.8"/><rect x="3.2" y="3.2" width="5.6" height="5.6"/><path d="M4.3 5.2h3.4M4.3 6.9h3.4" stroke-width="0.7"/></svg>
<svg style="left:528.7px;top:537px" width="12.8" height="12" viewBox="0 0 12.8 12" fill="none" stroke="#f4f4f4" stroke-width="1.1"><rect x="0.6" y="0.6" width="11.6" height="10.8"/><path d="M4 0.6v6h5v-6"/></svg>
<div class="a" style="left:558px;top:542.8px;width:6px;height:1px;background:#8a8a8a"></div>
<div class="a" style="left:569px;top:542.8px;width:87.3px;height:1px;background:#d4d4d4"></div>
<div class="a" style="left:610.3px;top:538px;width:5px;height:10.3px;background:#c6c6c6"></div>
<svg style="left:660.8px;top:539.9px" width="6.8" height="6.8" viewBox="0 0 6.8 6.8" stroke="#9a9a9a" stroke-width="1"><path d="M3.4 0v6.8M0 3.4h6.8"/></svg>

<div class="t" style="left:678.83px;top:539.09px;font-size:9.7px;color:#ececec;transform:scaleX(0.926);-webkit-text-stroke:0.25px #ececec;">100%</div>
<div class="a" style="left:717.5px;top:0;width:1.5px;height:552px;background:#2b2d27"></div>
<div class="a" style="left:719px;top:0;width:1px;height:161px;background:#1f2419"></div>
<div class="a" style="left:718.5px;top:157px;width:1.5px;height:6px;background:#dcdcdc"></div>
<div class="a" style="left:718.5px;top:163px;width:1.5px;height:90px;background:#858585"></div>
<div class="a" style="left:718.5px;top:253px;width:1.5px;height:301px;background:#1a1a1a"></div>
</body></html>
